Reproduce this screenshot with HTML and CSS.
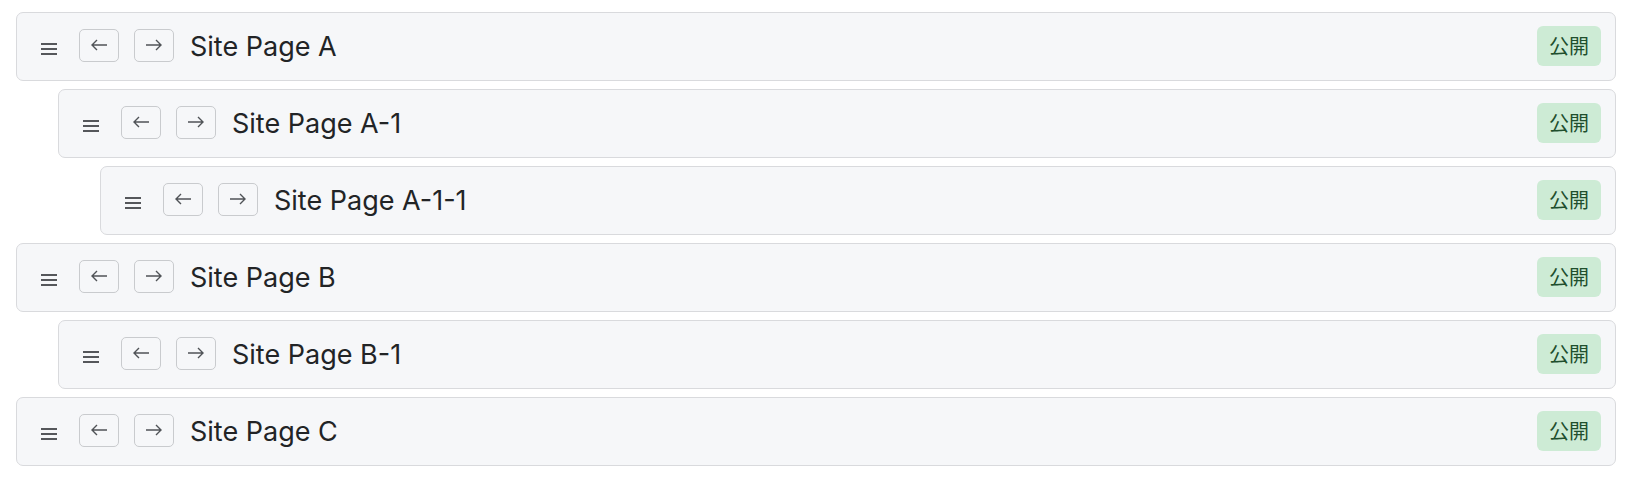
FILE: index.html
```html
<!DOCTYPE html>
<html lang="ja">
<head>
<meta charset="utf-8">
<title>Site Pages</title>
<link rel="stylesheet" href="styles.css">
</head>
<body>
<ul class="tree">
  <li class="row level-0">
    <span class="handle"><svg width="16" height="12" viewBox="0 0 16 12"><path d="M0 1h16M0 6h16M0 11h16" stroke="currentColor" stroke-width="2"/></svg></span>
    <button class="btn" type="button"><svg width="18" height="12" viewBox="0 0 18 12"><path d="M17 6H2M7 1L2 6l5 5" fill="none" stroke="currentColor" stroke-width="1.4"/></svg></button>
    <button class="btn" type="button"><svg width="18" height="12" viewBox="0 0 18 12"><path d="M1 6h15M11 1l5 5-5 5" fill="none" stroke="currentColor" stroke-width="1.4"/></svg></button>
    <span class="title">Site Page A</span>
    <span class="badge">公開</span>
  </li>
  <li class="row level-1">
    <span class="handle"><svg width="16" height="12" viewBox="0 0 16 12"><path d="M0 1h16M0 6h16M0 11h16" stroke="currentColor" stroke-width="2"/></svg></span>
    <button class="btn" type="button"><svg width="18" height="12" viewBox="0 0 18 12"><path d="M17 6H2M7 1L2 6l5 5" fill="none" stroke="currentColor" stroke-width="1.4"/></svg></button>
    <button class="btn" type="button"><svg width="18" height="12" viewBox="0 0 18 12"><path d="M1 6h15M11 1l5 5-5 5" fill="none" stroke="currentColor" stroke-width="1.4"/></svg></button>
    <span class="title">Site Page A-1</span>
    <span class="badge">公開</span>
  </li>
  <li class="row level-2">
    <span class="handle"><svg width="16" height="12" viewBox="0 0 16 12"><path d="M0 1h16M0 6h16M0 11h16" stroke="currentColor" stroke-width="2"/></svg></span>
    <button class="btn" type="button"><svg width="18" height="12" viewBox="0 0 18 12"><path d="M17 6H2M7 1L2 6l5 5" fill="none" stroke="currentColor" stroke-width="1.4"/></svg></button>
    <button class="btn" type="button"><svg width="18" height="12" viewBox="0 0 18 12"><path d="M1 6h15M11 1l5 5-5 5" fill="none" stroke="currentColor" stroke-width="1.4"/></svg></button>
    <span class="title">Site Page A-1-1</span>
    <span class="badge">公開</span>
  </li>
  <li class="row level-0">
    <span class="handle"><svg width="16" height="12" viewBox="0 0 16 12"><path d="M0 1h16M0 6h16M0 11h16" stroke="currentColor" stroke-width="2"/></svg></span>
    <button class="btn" type="button"><svg width="18" height="12" viewBox="0 0 18 12"><path d="M17 6H2M7 1L2 6l5 5" fill="none" stroke="currentColor" stroke-width="1.4"/></svg></button>
    <button class="btn" type="button"><svg width="18" height="12" viewBox="0 0 18 12"><path d="M1 6h15M11 1l5 5-5 5" fill="none" stroke="currentColor" stroke-width="1.4"/></svg></button>
    <span class="title">Site Page B</span>
    <span class="badge">公開</span>
  </li>
  <li class="row level-1">
    <span class="handle"><svg width="16" height="12" viewBox="0 0 16 12"><path d="M0 1h16M0 6h16M0 11h16" stroke="currentColor" stroke-width="2"/></svg></span>
    <button class="btn" type="button"><svg width="18" height="12" viewBox="0 0 18 12"><path d="M17 6H2M7 1L2 6l5 5" fill="none" stroke="currentColor" stroke-width="1.4"/></svg></button>
    <button class="btn" type="button"><svg width="18" height="12" viewBox="0 0 18 12"><path d="M1 6h15M11 1l5 5-5 5" fill="none" stroke="currentColor" stroke-width="1.4"/></svg></button>
    <span class="title">Site Page B-1</span>
    <span class="badge">公開</span>
  </li>
  <li class="row level-0">
    <span class="handle"><svg width="16" height="12" viewBox="0 0 16 12"><path d="M0 1h16M0 6h16M0 11h16" stroke="currentColor" stroke-width="2"/></svg></span>
    <button class="btn" type="button"><svg width="18" height="12" viewBox="0 0 18 12"><path d="M17 6H2M7 1L2 6l5 5" fill="none" stroke="currentColor" stroke-width="1.4"/></svg></button>
    <button class="btn" type="button"><svg width="18" height="12" viewBox="0 0 18 12"><path d="M1 6h15M11 1l5 5-5 5" fill="none" stroke="currentColor" stroke-width="1.4"/></svg></button>
    <span class="title">Site Page C</span>
    <span class="badge">公開</span>
  </li>
</ul>
</body>
</html>
```
FILE: styles.css
```css
* { box-sizing: border-box; }
html, body { margin: 0; padding: 0; background: #ffffff; }
body {
  font-family: Inter, "Noto Sans CJK JP", sans-serif;
  color: #222426;
}
.tree {
  list-style: none;
  margin: 0;
  padding: 12px 0 0 16px;
  width: 1616px;
  display: flex;
  flex-direction: column;
  gap: 8.5px;
}
.row {
  display: flex;
  align-items: center;
  height: 68.5px;
  background: #f6f7f9;
  border: 1px solid #d9dadd;
  border-radius: 7px;
  padding: 0 14px 0 24px;
}
.level-1 { margin-left: 42px; }
.level-2 { margin-left: 84px; }
.handle {
  display: flex;
  width: 16px;
  color: #55575b;
  margin-top: 6px;
  margin-right: 22px;
}
.handle svg { display: block; }
.btn {
  width: 40px;
  height: 33px;
  padding: 0;
  margin: -2px 15px 0 0;
  border: 1.5px solid #c9cbce;
  border-radius: 5px;
  background: #f6f7f9;
  color: #505357;
  display: flex;
  align-items: center;
  justify-content: center;
}
.btn svg { display: block; }
.title {
  flex: 1;
  font-size: 27px;
  margin-left: 1px;
  letter-spacing: 0;
}
.badge {
  font-family: "Noto Sans CJK JP", sans-serif;
  font-size: 20px;
  line-height: 40px;
  height: 40px;
  padding: 0 12px;
  border-radius: 6px;
  background: #cdebd5;
  color: #1f4f2e;
  margin-top: -1px;
}
```
